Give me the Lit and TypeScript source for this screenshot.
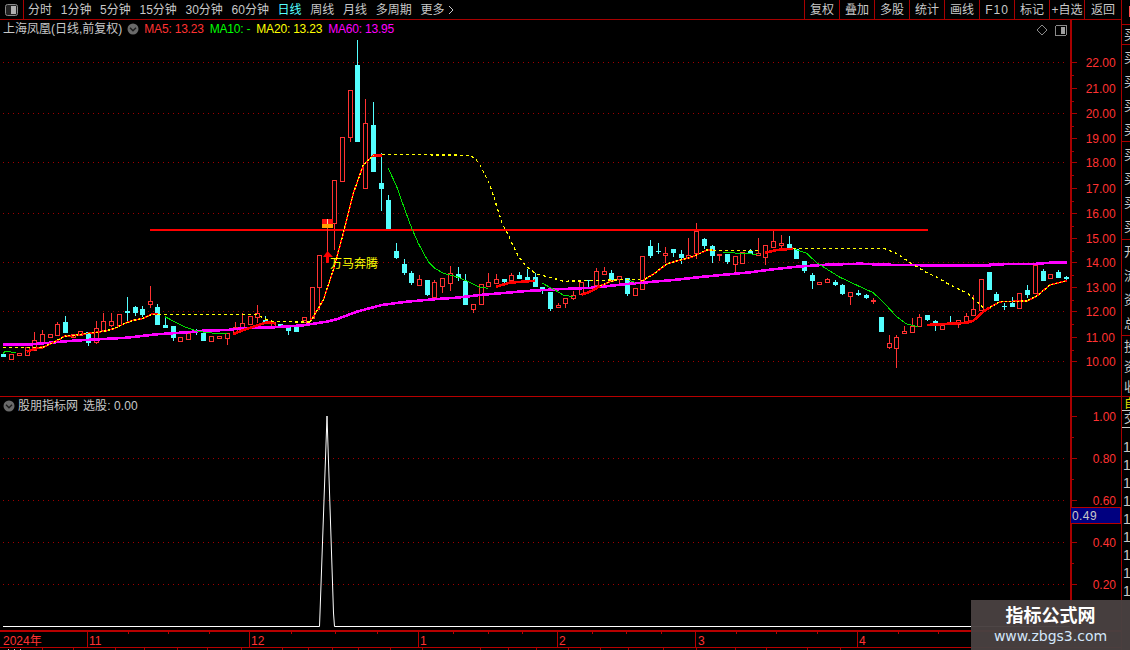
import { LitElement, html, css, svg } from "lit";
import { customElement } from "lit/decorators.js";

type Z = [number, number];
const Z3: Z = [0, 270], Z4: Z = [290, 50], Z5: Z = [460, 220], Z6: Z = [750, 220];
const map = (o: Z, a: number[]) => {
  const r: number[][] = [];
  for (let i = 0; i + 1 < a.length; i += 2) r.push([o[0] + a[i] / 3, o[1] + a[i + 1] / 3]);
  return r;
};
const pl = (p: number[][]) => p.map((q) => q[0].toFixed(1) + "," + q[1].toFixed(1)).join(" ");

// candle: zoom x, type (1 red, 0 cyan), high, top, bottom, low (0 = no wick)
type C = [number, number, number, number, number, number];
const C3: C[] = [
  [10,0,0,252,260,0],[34,1,0,253,266,0],[58,1,0,248,254,0],[80,1,0,232,255,0],[103,1,186,211,240,0],[127,1,180,193,220,0],
  [151,1,0,193,200,0],[172,1,156,163,194,0],[196,0,138,156,190,0],[219,1,0,192,200,0],[241,1,0,184,195,0],[265,0,0,187,218,228],
  [289,1,153,175,215,222],[310,1,128,154,180,185],[334,1,128,154,165,170],[358,1,0,133,165,0],[382,0,80,123,129,152],[404,0,108,111,130,138],
  [427,0,108,117,135,142],[451,1,48,94,101,115],[472,0,102,111,165,0],[496,0,145,165,174,0],[520,0,0,168,205,212],[541,1,0,202,213,0],
  [565,1,0,190,206,0],[589,0,178,182,184,195],[610,0,0,188,213,0],[634,1,0,198,213,0],[658,1,0,198,203,0],[682,1,0,190,203,225],
  [704,1,155,172,190,0],[727,1,130,160,173,0],[751,1,0,139,161,0],[772,1,105,130,140,160],[796,0,138,150,160,0],[820,1,0,155,167,0],
  [841,0,0,162,168,175],[865,0,0,172,183,195],[889,0,0,172,186,0],[913,1,0,142,157,0],
];
const C4: C[] = [
  [43,1,0,802,810,0],[65,1,0,712,805,0],[88,1,0,616,712,780],[133,1,0,391,520,600],[157,1,0,262,394,0],[181,1,0,121,262,275],
  [202,0,-30,45,275,0],[226,1,148,220,415,0],[250,0,156,225,365,0],[274,0,310,400,416,483],[295,0,435,450,537,0],[319,0,579,603,624,628],
  [343,0,628,642,668,675],[364,0,663,669,699,704],[388,1,675,687,704,0],[412,0,0,690,735,738],[433,1,690,696,740,750],[457,1,0,685,707,730],
  [481,1,648,670,700,723],[505,0,652,672,683,692],
];
const C5: C[] = [
  [15,0,163,183,255,0],[40,1,0,252,268,278],[64,1,0,193,251,0],[85,1,160,186,197,0],[109,1,163,178,188,0],[133,0,0,178,186,195],
  [154,1,158,166,179,0],[178,0,157,165,177,0],[202,0,147,171,185,0],[226,0,160,171,201,0],[247,0,0,201,210,222],[271,0,0,216,267,272],
  [295,1,250,256,262,0],[316,1,0,234,250,263],[340,1,213,225,233,240],[364,1,0,186,221,0],[385,0,0,180,184,200],[409,1,145,153,194,0],
  [433,1,142,153,161,0],[454,0,150,160,180,0],[478,1,0,168,176,190],[502,0,0,175,221,228],[526,1,0,204,224,0],[547,1,0,108,206,0],
  [571,0,60,78,108,113],[595,0,69,94,96,102],[616,1,80,100,104,130],[640,0,0,87,99,110],[664,0,90,101,114,132],[685,1,54,106,110,0],
  [709,1,10,33,100,118],[733,0,54,57,78,88],[757,0,75,78,108,128],[778,1,0,102,106,122],[802,0,0,102,126,132],[826,1,0,109,131,158],
  [847,1,0,96,128,131],[871,0,87,93,103,0],
];
const C6: C[] = [
  [25,1,54,100,106,0],[46,1,0,76,110,135],[70,1,33,64,80,0],[94,1,45,69,75,85],[118,0,48,72,84,0],[139,0,0,88,116,0],[163,0,0,124,152,158],
  [187,0,158,165,183,207],[208,1,0,187,193,0],[232,1,175,178,186,189],[256,0,181,186,194,198],[277,0,192,196,222,224],[301,1,0,217,227,255],
  [325,0,210,219,225,229],[349,0,222,225,233,237],[370,1,234,241,243,252],[394,0,0,291,336,0],[418,1,345,370,380,387],[439,1,345,352,383,444],
  [463,1,318,334,338,0],[487,1,293,318,335,0],[508,1,283,292,318,0],[532,0,0,285,300,303],[556,0,300,303,310,332],[577,1,0,315,326,0],
  [601,0,288,307,311,0],[625,1,0,301,311,323],[649,1,279,288,302,0],[670,1,225,268,285,0],[694,1,0,178,270,0],[718,0,0,156,210,0],
  [739,0,216,222,244,0],[763,0,250,257,259,270],[787,0,232,248,261,0],[808,1,0,220,263,0],[832,0,195,210,225,235],[856,1,130,135,218,0],
  [880,0,148,153,183,0],[901,1,0,163,174,178],[925,0,150,156,174,0],[949,0,167,171,177,185],
];

const candle = (o: Z, c: C) => {
  const x = Math.round(o[0] + c[0] / 3);
  const Y = (v: number) => Math.round(o[1] + v / 3);
  const col = c[1] ? "#ff3232" : "#54ffff";
  const top = Y(c[3]);
  const bot = Math.max(Y(c[4]), top + 1);
  return svg`
    ${c[2] ? svg`<rect x=${x} y=${Y(c[2])} width="1" height=${top - Y(c[2])} fill=${col}></rect>` : ""}
    ${c[5] ? svg`<rect x=${x} y=${bot} width="1" height=${Y(c[5]) - bot} fill=${col}></rect>` : ""}
    ${c[1]
      ? svg`<rect x=${x - 1.5} y=${top + 0.5} width="4" height=${bot - top} fill="#000" stroke=${col}></rect>`
      : svg`<rect x=${x - 2} y=${top} width="5" height=${bot - top} fill=${col}></rect>`}
  `;
};

const magenta = [
  ...map(Z3, [10,224,80,224,150,218,220,212,310,207,380,203,470,193,560,187,610,182,680,180,730,175,820,172,910,166,980,155]),
  ...map(Z4, [140,808,200,785,275,765,350,755,430,748,500,743]),
  ...map(Z5, [60,225,130,219,200,213,290,208,400,203,500,192,570,186,640,180,730,170]),
  ...map(Z6, [0,157,60,149,140,140,230,134,330,131,400,134,530,136,720,136,721,133,850,132,900,128,950,128]),
];
const redThick = [
  map(Z3, [80,245,110,235,130,232]),
  map(Z3, [700,192,730,180,770,167,800,157,825,160]),
  map(Z4, [250,316,275,317]),
  map(Z5, [108,200,150,188,225,182]),
  map(Z5, [365,224,395,213,420,198]),
  map(Z6, [45,98,80,90,130,86]),
  map(Z6, [530,315,650,308,670,302,700,275,720,262]),
];
const redYellow = [
  map(Z3, [130,232,170,212,195,198,220,197,250,192,290,187,320,182,345,175,375,160,400,151,430,145,455,133,475,133]),
  map(Z4, [60,815,70,800,100,750,130,660,160,550,190,430,220,345,250,315]),
  map(Z5, [420,198,450,185,470,180]),
  map(Z5, [545,183,580,163,620,132,660,120,690,113,720,100,740,90,760,90]),
  map(Z6, [720,262,750,245,830,243,860,228,900,195,950,182]),
];
const green = [
  map(Z3, [10,250,15,245,48,247]),
  map(Z3, [495,140,520,153,560,173,590,183,620,188,650,190,680,192]),
  [...map(Z4, [295,355,320,410,345,480,365,535,385,580,415,635,435,655,460,670,500,680,535,695,570,712]), ...map(Z5, [85,205])],
  map(Z5, [247,190,275,205,310,225,340,230]),
  map(Z5, [500,178,525,187]),
  map(Z5, [790,97,890,103]),
  map(Z6, [135,88,170,100,200,128,235,150,270,172,330,200,370,218,405,252,440,290,470,312,505,320]),
];
const yellow = [
  map(Z3, [10,232,130,232]),
  map(Z3, [475,133,770,133,790,145,820,155,930,156]),
  [...map(Z4, [275,313,540,316,555,325,570,345]), [490, 185], ...map(Z5, [127,12,140,35,155,68,170,100,185,122,197,138,215,152,230,162,250,167,285,176,310,184,540,178])],
  map(Z5, [760,92,900,92]),
  map(Z6, [130,86,405,86,440,100,480,128,520,152,560,172,610,200,650,218,680,245,700,263]),
];

const priceTicks: [string, number][] = [
  ["22.00",62],["21.00",88],["20.00",113],["19.00",138],["18.00",162],["17.00",188],["16.00",213],
  ["15.00",238],["14.00",262],["13.00",287],["12.00",311],["11.00",337],["10.00",361],
];
const priceGrid = [62,113,162,213,262,311,361];
const subTicks: [string, number][] = [["1.00",416],["0.80",458],["0.60",500],["0.40",542],["0.20",584]];
const subGrid = [458,500,542,584];
const tabs = ["分时","1分钟","5分钟","15分钟","30分钟","60分钟","日线","周线","月线","多周期"];
const btns = ["复权","叠加","多股","统计","画线","F10","标记","+自选","返回"];
const timeLabels: [string, number][] = [["2024年",3],["11",89],["12",251],["1",420],["2",559],["3",698],["4",859]];
const timeSeps = [87,249,418,557,695,857];
const timeTicks = [128,168,209,291,335,377,453,488,522,592,626,661,736,776,817,898,938];
const bottomSeps = [42,73,115,144,177,207,241,282,308,332,358,390,422,480,508,536,568,600,628,663,696,735,766,807,840];
const sideGroups: string[][] = [
  ["买","买","买","买"],["买","买","买","买"],["开","流","资","总"],["投","资","收"],
];
const ones = Array.from({ length: 9 }, (_, i) => i);

const chevron = html`<svg class="chev" viewBox="0 0 12 12" width="12" height="12">
  <circle cx="6" cy="6" r="5.5" fill="#6a6a6a"></circle>
  <path d="M3 4.8 L6 7.8 L9 4.8" fill="none" stroke="#1c1c1c" stroke-width="1.4"></path>
</svg>`;

@customElement("app-root")
export class AppRoot extends LitElement {
  static styles = css`
    :host {
      display: block;
      position: relative;
      width: 1130px;
      height: 650px;
      overflow: hidden;
      background: #000;
      color: #c8c8c8;
      font: 12px/1 "Liberation Sans", "Noto Sans CJK SC", sans-serif;
    }
    svg { display: block; }
    text { font-family: "Liberation Sans", "Noto Sans CJK SC", sans-serif; font-size: 12px; }
    .page { display: flex; width: 1130px; height: 650px; }
    .left { width: 1121px; display: flex; flex-direction: column; }
    .top { height: 19px; border-bottom: 1px solid #a80000; display: flex; align-items: center; flex: none; }
    .layout { width: 23px; height: 19px; border-right: 1px solid #a80000; display: flex; align-items: center; justify-content: center; flex: none; }
    .tabs { display: flex; gap: 8.7px; margin-left: 4px; }
    .tab.on { color: #54ffff; }
    .more { display: flex; align-items: center; gap: 4px; }
    .btns { margin-left: auto; display: flex; height: 19px; }
    .btn { width: 34px; border-left: 1px solid #a80000; display: flex; align-items: center; justify-content: center; white-space: nowrap; }
    .btn.last { width: 36px; }
    .btn.f10 { letter-spacing: 1px; }
    .pane { position: relative; display: flex; flex: none; border-bottom: 1px solid #b80000; }
    .price { height: 376px; }
    .sub { height: 233px; }
    .axis { border-left: 2px solid #a80000; }
    .legend { position: absolute; left: 3px; top: 0; height: 18px; display: flex; align-items: center; white-space: nowrap; }
    .sub .legend { height: 17px; }
    .chev { margin: 0 4px 0 5px; flex: none; }
    .sub .chev { margin-left: 0; margin-right: 3px; }
    .ma { letter-spacing: -0.2px; margin-right: 6px; }
    .ma5 { color: #ff3232; margin-left: 1px; }
    .ma10 { color: #00ff00; }
    .ma20 { color: #ffff00; }
    .ma60 { color: #ff00ff; }
    .pick { margin-left: 5px; letter-spacing: 0.1px; }
    .marker {
      position: absolute; left: 1071px; top: 110px; width: 48px; height: 15px;
      background: #000080; border: 1px solid #b80000; border-left: 0;
      color: #c8c8c8; display: flex; align-items: center; padding-left: 1px; letter-spacing: 0.4px;
    }
    .time { height: 16px; flex: none; border-bottom: 1px solid #b80000; }
    .bottom { flex: 1; }
    .side { width: 9px; border-left: 1px solid #a80000; overflow: hidden; flex: none; display: flex; flex-direction: column; }
    .s-top { height: 25px; flex: none; border-bottom: 1px solid #a80000; display: flex; justify-content: flex-end; padding-top: 6px; box-sizing: border-box; }
    .s-flag { width: 2px; height: 11px; background: #ff5050; }
    .s-head { height: 19px; flex: none; border-bottom: 1px solid #a80000; padding-left: 2px; display: flex; align-items: center; white-space: nowrap; font-size: 13px; }
    .s-group { flex: none; border-bottom: 1px solid #a80000; padding-left: 2px; box-sizing: border-box; display: flex; flex-direction: column; }
    .s-cell { height: 24px; display: flex; align-items: center; font-size: 13px; white-space: nowrap; }
    .g1 { height: 97px; }
    .g2 { height: 98px; }
    .g3 { height: 96px; }
    .g4 { height: 61px; }
    .s-self { height: 13px; flex: none; color: #e0e000; padding-left: 2px; display: flex; align-items: center; white-space: nowrap; }
    .s-trade { height: 18px; flex: none; border-top: 1px solid #c8c8c8; border-bottom: 1px solid #c8c8c8; box-sizing: border-box; padding-left: 2px; display: flex; align-items: center; white-space: nowrap; }
    .s-nums { padding: 10px 0 0 1px; display: flex; flex-direction: column; }
    .s-num { height: 18px; display: flex; align-items: center; font-size: 14px; }
    .mark {
      position: absolute; left: 971px; top: 600px; width: 159px; height: 50px;
      background: rgba(72, 64, 64, 0.97);
      display: flex; flex-direction: column; align-items: center; justify-content: center; gap: 4px;
    }
    .mark-cn { color: #fff; font-size: 18px; font-weight: 700; }
    .mark-url { color: #d4e6fa; font-family: "DejaVu Sans", sans-serif; font-size: 14px; }
  `;

  private plot() {
    const groups: [Z, C[]][] = [[Z3, C3], [Z4, C4], [Z5, C5], [Z6, C6]];
    return svg`<svg width="1070" height="376" viewBox="0 20 1070 376" shape-rendering="crispEdges">
      ${priceGrid.map((y) => svg`<line x1="3" x2="1067" y1=${y + 0.5} y2=${y + 0.5} stroke="#a00000" stroke-dasharray="1 4"></line>`)}
      <path d="M1042 25 L1047 30 L1042 35 L1037 30 Z" fill="none" stroke="#8a8a8a" shape-rendering="auto"></path>
      <rect x="1055.5" y="25.5" width="11" height="10" rx="1.5" fill="#000" stroke="#8a8a8a"></rect>
      <rect x="1061" y="27" width="4" height="7" fill="#a0a0a0"></rect>
      ${groups.map(([o, cs]) => cs.map((c) => candle(o, c)))}
      <rect x="150" y="229" width="778" height="2" fill="#ff0000"></rect>
      <rect x="327" y="228" width="1" height="24" fill="#ff3232"></rect>
      <rect x="322" y="219" width="11" height="5" fill="#ff1010"></rect>
      <rect x="322" y="224" width="11" height="4" fill="#ffa000"></rect>
      <rect x="327" y="219" width="1" height="5" fill="#ffd0a0"></rect>
      <polyline points=${pl(magenta)} fill="none" stroke="#ff00ff" stroke-width="2.6"></polyline>
      ${green.map((p) => svg`<polyline points=${pl(p)} fill="none" stroke="#00e000" stroke-width="1"></polyline>`)}
      ${redThick.map((p) => svg`<polyline points=${pl(p)} fill="none" stroke="#ff0000" stroke-width="2.6"></polyline>`)}
      ${redYellow.map((p) => svg`
        <polyline points=${pl(p)} fill="none" stroke="#ff0000" stroke-width="1.7"></polyline>
        <polyline points=${pl(p)} fill="none" stroke="#ffff00" stroke-width="1.3" stroke-dasharray="2 2"></polyline>`)}
      ${yellow.map((p) => svg`<polyline points=${pl(p)} fill="none" stroke="#ffff00" stroke-width="1.3" stroke-dasharray="3 3"></polyline>`)}
      <path d="M327.5 251 L333 257 L329 257 L329 263 L326 263 L326 257 L323 257 Z" fill="#ff0000" shape-rendering="auto"></path>
      <text x="330" y="267.5" fill="#ffff00" shape-rendering="auto">万马奔腾</text>
    </svg>`;
  }

  private axis(w: number, h: number, top: number, ticks: [string, number][], lx: number) {
    const step = ticks[1][1] - ticks[0][1];
    const last = ticks[ticks.length - 1][1];
    const mids = ticks.map((t) => t[1] + step / 2).filter((y) => y < last);
    return svg`<svg class="axis" width=${w} height=${h} viewBox="0 ${top} ${w} ${h}">
      ${ticks.map((t) => svg`
        <rect x="0" y=${t[1]} width="5" height="1" fill="#a80000" shape-rendering="crispEdges"></rect>
        <text x=${lx} y=${t[1] + 5} fill="#ff3232">${t[0]}</text>`)}
      ${mids.map((y) => svg`<rect x="0" y=${Math.round(y)} width="2" height="1" fill="#a80000" shape-rendering="crispEdges"></rect>`)}
    </svg>`;
  }

  private subPlot() {
    return svg`<svg width="1070" height="233" viewBox="0 397 1070 233">
      ${subGrid.map((y) => svg`<line x1="3" x2="1067" y1=${y + 0.5} y2=${y + 0.5} stroke="#a00000" stroke-dasharray="1 4" shape-rendering="crispEdges"></line>`)}
      <polyline points="3,626.5 319.5,626.5 320,613 327,416 333.5,613 334.5,626.5 1070,626.5" fill="none" stroke="#ffffff" stroke-width="1"></polyline>
    </svg>`;
  }

  private timeAxis() {
    return svg`<svg width="1121" height="16" viewBox="0 630 1121 16" shape-rendering="crispEdges">
      <rect x="0" y="630" width="1121" height="1" fill="#b80000"></rect>
      ${timeSeps.map((x) => svg`<rect x=${x} y="630" width="1" height="16" fill="#b80000"></rect>`)}
      ${timeTicks.map((x) => svg`<rect x=${x} y="630" width="1" height="3" fill="#b80000"></rect>`)}
      ${timeLabels.map((t) => svg`<text x=${t[1]} y="644" fill="#ff3232" shape-rendering="auto">${t[0]}</text>`)}
    </svg>`;
  }

  private bottomRow() {
    return svg`<svg width="1121" height="3" viewBox="0 647 1121 3" shape-rendering="crispEdges">
      ${bottomSeps.map((x) => svg`<rect x=${x} y="647" width="1" height="3" fill="#a80000"></rect>`)}
      <rect x="8" y="648" width="1" height="2" fill="#c8c8c8"></rect>
      <rect x="14" y="648" width="1" height="2" fill="#c8c8c8"></rect>
      <rect x="20" y="648" width="1" height="2" fill="#c8c8c8"></rect>
      <rect x="51" y="649" width="1" height="1" fill="#c8c8c8"></rect>
      <rect x="828" y="649" width="1" height="1" fill="#c8c8c8"></rect>
      <rect x="846" y="649" width="7" height="1" fill="#54ffff"></rect>
      <rect x="857" y="649" width="9" height="1" fill="#54ffff"></rect>
    </svg>`;
  }

  render() {
    return html`
      <div class="page">
        <div class="left">
          <div class="top">
            <div class="layout">
              <svg width="13" height="12" viewBox="0 0 13 12">
                <rect x="0.5" y="0.5" width="12" height="11" rx="2" fill="#222" stroke="#8a8a8a"></rect>
                <rect x="6" y="2" width="5" height="8" fill="#b0b0b0"></rect>
              </svg>
            </div>
            <div class="tabs">
              ${tabs.map((t) => html`<span class="tab ${t === "日线" ? "on" : ""}">${t}</span>`)}
              <span class="tab more">更多
                <svg width="6" height="10" viewBox="0 0 6 10"><path d="M1 1 L5 5 L1 9" fill="none" stroke="#c8c8c8"></path></svg>
              </span>
            </div>
            <div class="btns">
              ${btns.map((b) => html`<div class="btn ${b === "F10" ? "f10" : ""} ${b === "返回" ? "last" : ""}">${b}</div>`)}
            </div>
          </div>

          <div class="pane price">
            ${this.plot()}
            ${this.axis(49, 376, 20, priceTicks, 13.7)}
            <div class="legend">
              <span>上海凤凰(日线,前复权)</span>${chevron}
              <span class="ma ma5">MA5: 13.23</span>
              <span class="ma ma10">MA10: -</span>
              <span class="ma ma20">MA20: 13.23</span>
              <span class="ma ma60">MA60: 13.95</span>
            </div>
          </div>

          <div class="pane sub">
            ${this.subPlot()}
            ${this.axis(49, 233, 397, subTicks, 20.7)}
            <div class="legend">
              ${chevron}<span>股朋指标网</span><span class="pick">选股: 0.00</span>
            </div>
            <div class="marker">0.49</div>
          </div>

          <div class="time">${this.timeAxis()}</div>
          <div class="bottom">${this.bottomRow()}</div>
        </div>

        <div class="side">
          <div class="s-top"><div class="s-flag"></div></div>
          <div class="s-head">买</div>
          ${sideGroups.map((g, i) => html`<div class="s-group g${i + 1}">${g.map((c) => html`<div class="s-cell">${c}</div>`)}</div>`)}
          <div class="s-self">自</div>
          <div class="s-trade">交</div>
          <div class="s-nums">${ones.map(() => html`<div class="s-num">1</div>`)}</div>
        </div>
      </div>
      <div class="mark">
        <div class="mark-cn">指标公式网</div>
        <div class="mark-url">www.zbgs3.com</div>
      </div>
    `;
  }
}
